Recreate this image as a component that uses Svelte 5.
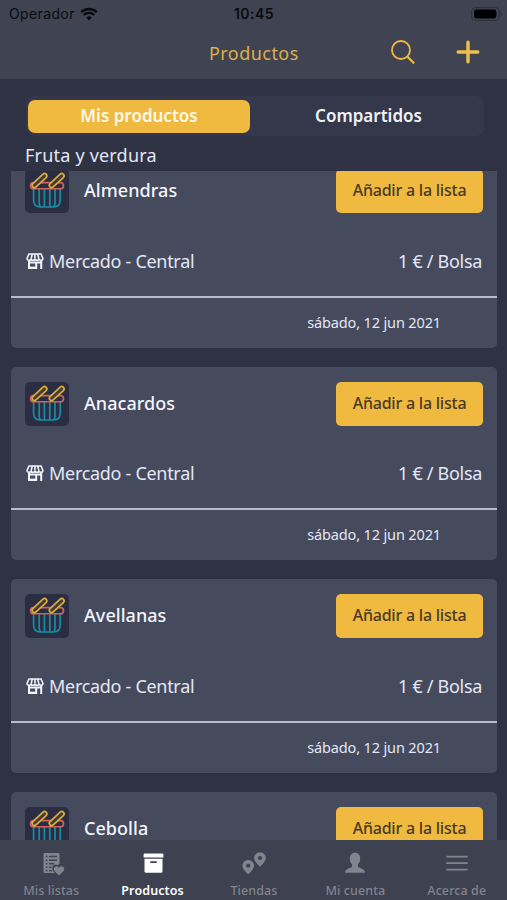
<script lang="ts">
    type Product = { name: string; store: string; price: string; date: string };

    const products: Product[] = ['Almendras', 'Anacardos', 'Avellanas', 'Cebolla'].map((name) => ({
        name,
        store: 'Mercado - Central',
        price: '1 € / Bolsa',
        date: 'sábado, 12 jun 2021'
    }));

    // cards whose lower half fits above the tab bar
    const fullCards = 3;

    const tabs = [
        { id: 'lists', label: 'Mis listas' },
        { id: 'products', label: 'Productos' },
        { id: 'stores', label: 'Tiendas' },
        { id: 'account', label: 'Mi cuenta' },
        { id: 'about', label: 'Acerca de' }
    ];

    let activeTab = $state('products');
    let segment = $state('own');
</script>

<div class="app">
    <header>
        <div class="status">
            <div class="carrier">
                <span>Operador</span>
                <svg class="wifi" viewBox="0 0 18 14">
                    <path d="M1.2 5.1a11.2 11.2 0 0 1 15.6 0M3.8 8a7.4 7.4 0 0 1 10.4 0" fill="none" stroke="#08090d" stroke-width="2.4" />
                    <path d="M9 13.4l-2.7-2.8a3.9 3.9 0 0 1 5.4 0z" fill="#08090d" />
                </svg>
            </div>
            <span class="time">10:45</span>
            <svg class="battery" viewBox="0 0 32 14">
                <rect x=".6" y=".6" width="27.8" height="12.8" rx="4.2" fill="none" stroke="#2f313c" stroke-width="1.1" />
                <rect x="3" y="2.5" width="22.4" height="9" rx="2.4" fill="#000" />
                <path d="M29.6 4.8q2 2.2 0 4.4z" fill="#2b2d38" />
            </svg>
        </div>
        <div class="navbar">
            <h1>Productos</h1>
            <button class="nav-btn" aria-label="Buscar">
                <svg width="26" height="26" viewBox="0 0 26 26" fill="none" stroke="#edb941" stroke-width="1.8" stroke-linecap="round">
                    <circle cx="11" cy="11" r="9" />
                    <path d="M17.5 17.7l6 6" stroke-width="2.3" />
                </svg>
            </button>
            <button class="nav-btn" aria-label="Añadir">
                <svg width="26" height="26" viewBox="0 0 26 26" fill="none" stroke="#f0c14a" stroke-width="3.4" stroke-linecap="round">
                    <path d="M13 3.2v19.6M3.2 13h19.6" />
                </svg>
            </button>
        </div>
    </header>

    <main>
        <div class="segments">
            <button class:active={segment === 'own'} onclick={() => (segment = 'own')}>Mis productos</button>
            <button class:active={segment === 'shared'} onclick={() => (segment = 'shared')}>Compartidos</button>
        </div>
        <h2>Fruta y verdura</h2>
        <div class="list">
            {#each products as product, i}
                <article class="card">
                    <div class="top">
                        <div class="thumb">
                            <svg width="44" height="44" viewBox="0 0 44 44" fill="none" stroke-linecap="round" stroke-linejoin="round">
                                <path d="M8.600 20v11q0 7 6.500 7h13.600q6.500 0 6.500-7V20M14.200 20v14q0 2.500 1.500 4M19.400 20v18M24.800 20v18M30 20v14q0 2.500-1.500 4" stroke="#178ca5" stroke-width="1.7" />
                                <rect x="5.500" y="13.600" width="33" height="6.200" rx="3.100" stroke="#cf6161" stroke-width="1.600" />
                                <rect x="5.300" y="9.300" width="18.400" height="4.600" rx="2.300" transform="rotate(-43 14.500 11.600)" fill="#453a3c" stroke="#d9ae3b" stroke-width="1.700" />
                                <rect x="22.500" y="9.300" width="18.400" height="4.600" rx="2.300" transform="rotate(-43 31.700 11.600)" fill="#453a3c" stroke="#d9ae3b" stroke-width="1.700" />
                            </svg>
                        </div>
                        <h3>{product.name}</h3>
                        <button class="add">Añadir a la lista</button>
                    </div>
                    {#if i < fullCards}
                        <div class="details">
                            <svg width="18" height="16" viewBox="0 0 18 16" fill="none" stroke="#f2f4fc">
                                <path d="M3 1h12l1.900 4.300q0 2-1.900 2t-2-1.500q0 1.500-2 1.500T9 5.800q0 1.500-2 1.500T5 5.800q0 1.500-2 1.500t-1.900-2zM6.200 1.200l-1 4.400M9 1.200v4.400M11.800 1.200l1 4.400" stroke-width="1.6" />
                                <path d="M3 8v7h7.200V9.600M15.200 8v8M3 9.400h12.200" stroke-width="2" />
                                <path d="M3 14.800h7" stroke-width="2.300" />
                            </svg>
                            <span class="store">{product.store}</span>
                            <span class="price">{product.price}</span>
                        </div>
                        <footer>{product.date}</footer>
                    {/if}
                </article>
            {/each}
        </div>
    </main>

    <nav>
        {#each tabs as tab}
            <button class={['tab', { active: activeTab === tab.id }]} onclick={() => (activeTab = tab.id)}>
                <svg width="28" height="26" viewBox="0 0 28 26">
                    {#if tab.id === 'lists'}
                        <path fill="currentColor" fill-rule="evenodd" d="M7.700 3h13.600q1.200 0 1.200 1.200V14l-2 1-2.200-.6q-3 .6-3 3.800 0 3 2.600 4.800H7.700Q6.500 23 6.500 21.800V4.200Q6.500 3 7.700 3zM8.800 5.800v1.500h1.600V5.800zm3.200 0v1.500h8V5.800zM8.800 9.400v1.500h1.600V9.400zm3.200 0v1.500h8V9.400zM8.800 13v1.500h1.600V13zm3.200 0v1.500h5V13zM8.800 16.600v1.500h1.600v-1.500zm3.200 0v1.500h2.500v-1.500zM8.800 19.900v1.400h1.600v-1.400zm3.200 0v1.400h3v-1.400z" />
                        <path fill="currentColor" d="M22 25.500l-4.300-4.200q-2-2.500.1-4.400 2.200-1.500 4.200.8 2-2.300 4.200-.8 2.100 1.900.1 4.400z" />
                    {:else if tab.id === 'products'}
                        <path fill="currentColor" fill-rule="evenodd" d="M5.600 3.500h17.800q1 0 1 1v3H4.600v-3q0-1 1-1zM5.500 8.700h18v12.500q0 1.600-1.600 1.600H7.100q-1.600 0-1.600-1.600zM11.800 11.300q-.8 0-.8.8t.8.8h5.400q.8 0 .8-.8t-.8-.8z" />
                    {:else if tab.id === 'stores'}
                        <path fill="currentColor" fill-rule="evenodd" d="M8.200 24.400Q2.300 19 2.300 15.800a5.900 5.900 0 0 1 11.800 0Q14.100 19 8.200 24.400zM8.200 13.600a2.100 2.100 0 1 0 0 4.200 2.100 2.100 0 0 0 0-4.200zM20 16.800Q14.100 11.300 14.100 8.100a5.900 5.900 0 0 1 11.800 0q0 3.200-5.900 8.700zM20 5.900a2.100 2.100 0 1 0 0 4.200 2.100 2.100 0 0 0 0-4.200z" />
                    {:else if tab.id === 'account'}
                        <path fill="currentColor" d="M14 2.800c3.300 0 5.200 2.500 5.200 5.600 0 2.500-.9 4.700-2.300 5.900v2.400c1.300 1.700 7.100 1.600 7.100 6.100H4c0-4.500 5.800-4.400 7.100-6.100v-2.400C9.700 13.100 8.800 10.900 8.800 8.400c0-3.100 1.900-5.600 5.200-5.600z" />
                    {:else}
                        <path fill="none" stroke="currentColor" stroke-width="1.700" d="M3.300 6.600h21.400M3.300 13.200h21.400M3.300 19.600h21.400" />
                    {/if}
                </svg>
                <span>{tab.label}</span>
            </button>
        {/each}
    </nav>
</div>

<style>
    :global(body) {
        margin: 0;
        background: #2e3243;
    }

    .app {
        display: flex;
        flex-direction: column;
        height: 900px;
        overflow: hidden;
        background: #2e3243;
        color: #e3e7f5;
        font-family: 'Noto Sans', 'Open Sans', sans-serif;
    }

    button {
        padding: 0;
        border: none;
        background: none;
        color: inherit;
        font: inherit;
        white-space: nowrap;
        cursor: pointer;
    }

    svg {
        display: block;
        flex: none;
    }

    h1,
    h2,
    h3 {
        margin: 0;
        font-weight: 400;
    }

    span,
    h1,
    h2,
    h3,
    footer {
        white-space: nowrap;
    }

    header {
        flex: none;
        height: 79px;
        background: #404352;
    }

    .status {
        display: grid;
        grid-template-columns: 1fr auto 1fr;
        align-items: center;
        height: 27px;
        padding: 0 4px 0 9px;
        color: #0a0b10;
        font-family: Inter, 'Liberation Sans', sans-serif;
        font-size: 14px;
    }

    .carrier {
        display: flex;
        align-items: center;
        gap: 5px;
        letter-spacing: 0.37px;
    }

    .wifi {
        width: 18px;
        height: 14px;
    }

    .time {
        padding-right: 4px;
        font-weight: 600;
        letter-spacing: 0.5px;
    }

    .battery {
        width: 32px;
        height: 14px;
        justify-self: end;
    }

    .navbar {
        display: grid;
        grid-template-columns: 1fr 26px 26px;
        column-gap: 39px;
        align-items: center;
        height: 50px;
        padding: 0 26px 0 209px;
    }

    h1 {
        padding-top: 1px;
        color: #dcb04a;
        font-size: 18px;
        letter-spacing: 0.45px;
        line-height: 26px;
    }

    main {
        display: flex;
        flex: 1;
        flex-direction: column;
        min-height: 0;
        padding-top: 17px;
    }

    .segments {
        display: grid;
        grid-template-columns: 222px 1fr;
        column-gap: 5px;
        flex: none;
        box-sizing: border-box;
        height: 40px;
        margin: 0 23px 0 26px;
        padding: 4px 2px 3px;
        border-radius: 8px;
        background: #35384a;
    }

    .segments button {
        padding-bottom: 2px;
        border-radius: 7px;
        color: #f1f3fb;
        font-size: 17px;
        font-weight: 600;
        line-height: 30px;
    }

    .segments .active {
        background: #f0b940;
        color: #fff8e8;
    }

    h2 {
        flex: none;
        height: 35px;
        padding-left: 25px;
        font-size: 18px;
        letter-spacing: 0.2px;
        line-height: 38px;
    }

    .list {
        display: flex;
        flex: 1;
        flex-direction: column;
        gap: 19px;
        min-height: 0;
        padding: 0 10px 0 11px;
        overflow: hidden;
    }

    .card {
        flex: none;
        height: 193.7px;
        border-radius: 5px;
        background: #454a5d;
    }

    /* the list is scrolled a little, so the first card starts under the heading */
    .card:first-child {
        margin-top: -17px;
    }

    .top {
        display: flex;
        align-items: center;
        padding: 15px 14px 0;
    }

    .thumb {
        width: 44px;
        height: 44px;
        border-radius: 5px;
        background: #2b2e42;
    }

    h3 {
        flex: 1;
        padding: 0 0 2px 15px;
        color: #f3f5fc;
        font-size: 18px;
        font-weight: 500;
        letter-spacing: 0.05px;
    }

    .add {
        width: 147px;
        height: 44px;
        padding-bottom: 2px;
        border-radius: 5px;
        background: #f0b940;
        color: #493b25;
        font-size: 16px;
        font-weight: 500;
        letter-spacing: -0.22px;
    }

    .details {
        display: flex;
        align-items: center;
        box-sizing: border-box;
        height: 82.5px;
        padding: 13px 15px 0 15px;
        font-size: 18px;
        letter-spacing: -0.3px;
    }

    .store {
        margin-left: 5px;
    }

    .price {
        margin-left: auto;
    }

    footer {
        padding-right: 56px;
        border-top: 2px solid #b5bccc;
        font-size: 14.5px;
        letter-spacing: -0.14px;
        line-height: 49px;
        text-align: right;
    }

    nav {
        display: grid;
        grid-template-columns: repeat(5, 1fr);
        flex: none;
        height: 60px;
        background: #3e414f;
    }

    .tab {
        display: flex;
        flex-direction: column;
        align-items: center;
        gap: 6px;
        padding: 10px 0 0 1px;
        color: #81848d;
        font-size: 12.5px;
        font-weight: 500;
        line-height: 17px;
    }

    .tab span {
        letter-spacing: 0.1px;
    }

    .tab.active {
        color: #fff;
        font-weight: 600;
    }
</style>
